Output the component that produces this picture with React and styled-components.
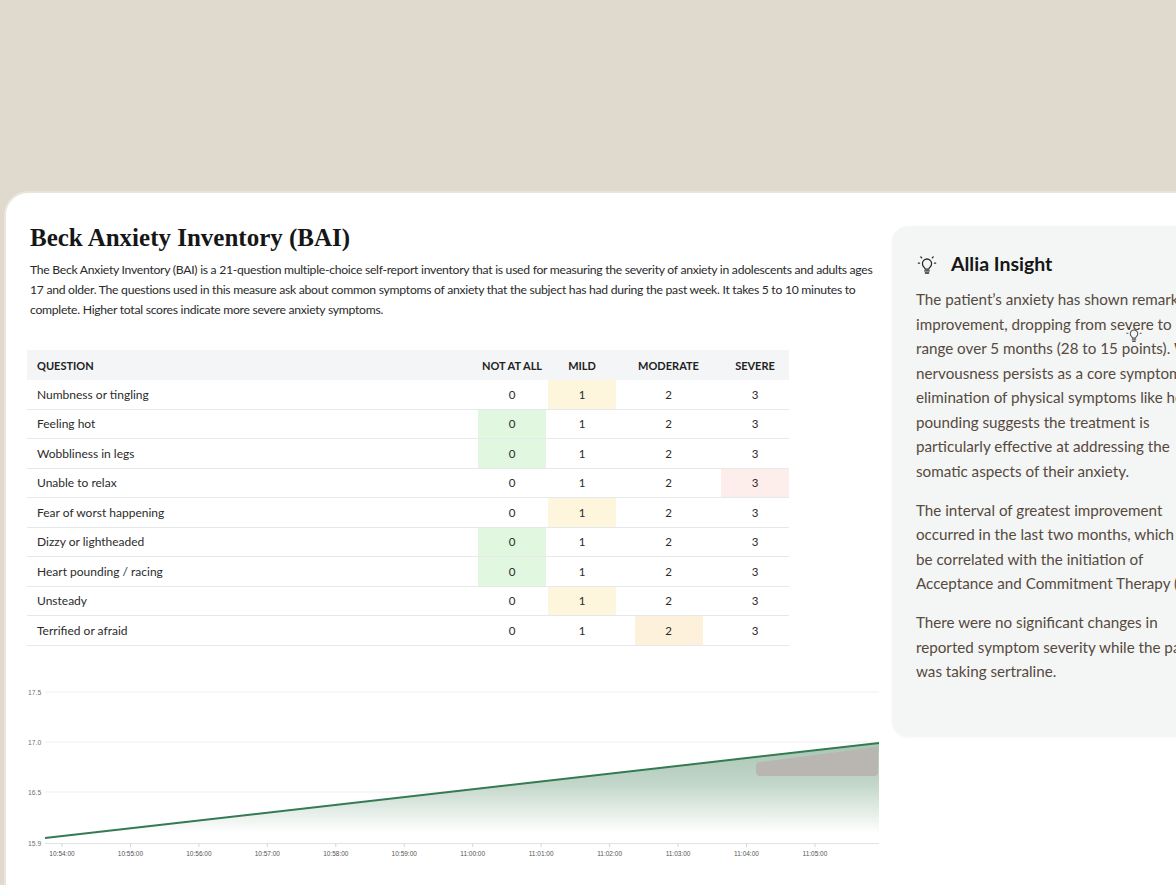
import React from "react";
import styled, { createGlobalStyle } from "styled-components";

const Global = createGlobalStyle`
  html, body { margin: 0; padding: 0; background: #e0d9ce; overflow: hidden; }
  body { font-family: Lato, "Noto Sans", sans-serif; }
  * { box-sizing: border-box; }
`;

const Page = styled.div`
  width: 1176px;
  height: 885px;
  overflow: hidden;
  padding: 193px 0 0 6px;
`;

const Card = styled.div`
  display: flex;
  gap: 12px;
  width: 1400px;
  min-height: 760px;
  padding: 33px 0 0 24px;
  background: #ffffff;
  border-top-left-radius: 22px;
  box-shadow: 0 0 0 2px rgba(255, 255, 255, 0.3);
`;

const LeftCol = styled.section`
  flex: none;
  width: 850px;
`;

const Title = styled.h1`
  margin: 0;
  font-family: "Liberation Serif", "DejaVu Serif", serif;
  font-size: 25px;
  line-height: 24px;
  font-weight: 700;
  color: #161616;
`;

const Desc = styled.p`
  margin: 10px 0 0;
  width: 848px;
  font-size: 12.2px;
  letter-spacing: -0.28px;
  line-height: 20px;
  color: #2a2a2a;
`;

const Table = styled.div`
  margin: 30px 0 0 -3px;
  width: 762px;
`;

const Row = styled.div`
  display: grid;
  grid-template-columns: 1fr 72px 68px 105px 68px;
  align-items: stretch;
  height: ${(p) => (p.$head ? "30px" : "29.5px")};
  background: ${(p) => (p.$head ? "#f4f5f6" : "transparent")};
  border-bottom: ${(p) => (p.$head ? "none" : "1px solid #e5e9e9")};
`;

const HeadCell = styled.div`
  display: flex;
  align-items: center;
  justify-content: ${(p) => (p.$left ? "flex-start" : "center")};
  padding-left: ${(p) => (p.$left ? "10px" : "0")};
  font-size: 11px;
  font-weight: 700;
  color: #222;
  white-space: nowrap;
`;

const QCell = styled.div`
  display: flex;
  align-items: center;
  padding-left: 10px;
  font-size: 12px;
  color: #2b2b2b;
`;

const toneColors = {
  green: "#e2f7df",
  yellow: "#fdf6dc",
  red: "#fdeeec",
  orange: "#fdf1dc",
};

const ScoreCell = styled.div`
  justify-self: center;
  width: 68px;
  display: flex;
  align-items: center;
  justify-content: center;
  font-size: 11.5px;
  color: #2b2b2b;
  background: ${(p) => (p.$tone ? toneColors[p.$tone] : "transparent")};
`;

const Chart = styled.svg`
  display: block;
  margin: 37px 0 0 -3px;
  overflow: visible;
`;

const Insight = styled.aside`
  position: relative;
  flex: none;
  width: 352px;
  height: 511px;
  padding: 26px 24px 24px 24px;
  background: #f3f6f5;
  border-radius: 16px;
  box-shadow: 0 1px 3px rgba(0, 0, 0, 0.03);
`;

const InsightHead = styled.div`
  display: flex;
  align-items: center;
  gap: 13px;
  height: 24px;
`;

const InsightTitle = styled.h2`
  margin: 0;
  font-size: 19.5px;
  line-height: 24px;
  font-weight: 700;
  color: #161616;
`;

const InsightBody = styled.div`
  margin-top: 11px;
  width: 304px;
`;

const Para = styled.p`
  margin: 0 0 14.5px;
  font-size: 15.2px;
  line-height: 24.5px;
  color: #574940;
`;

const Ghost = styled.div`
  position: absolute;
  left: 233px;
  top: 99px;
  opacity: 0.8;
`;

const Bulb = ({ size = 20 }) => (
  <svg width={size} height={size} viewBox="0 0 24 24" fill="none" stroke="#2a2a2a" strokeWidth="1.4" strokeLinecap="round" strokeLinejoin="round">
    <path d="M2.5 11h1.4M20.1 11h1.4M5.2 4.2l1 1M18.8 4.2l-1 1" />
    <path d="M8.6 15.2a5 5 0 1 1 6.8 0c-.8.7-1.2 1.5-1.3 2.3h-4.2c-.1-.8-.5-1.6-1.3-2.3z" />
    <path d="M9.6 19.6h4.8M10.2 21.8h3.6" />
  </svg>
);

const rows = [
  ["Numbness or tingling", 1, "yellow"],
  ["Feeling hot", 0, "green"],
  ["Wobbliness in legs", 0, "green"],
  ["Unable to relax", 3, "red"],
  ["Fear of worst happening", 1, "yellow"],
  ["Dizzy or lightheaded", 0, "green"],
  ["Heart pounding / racing", 0, "green"],
  ["Unsteady", 1, "yellow"],
  ["Terrified or afraid", 2, "orange"],
];

const yTicks = [
  ["17.5", 9],
  ["17.0", 59],
  ["16.5", 109],
];
const xLabels = ["10:54:00", "10:55:00", "10:56:00", "10:57:00", "10:58:00", "10:59:00", "11:00:00", "11:01:00", "11:02:00", "11:03:00", "11:04:00", "11:05:00"];

const ChartSvg = () => (
  <Chart width="853" height="185" viewBox="0 0 853 185">
    <defs>
      <linearGradient id="areaFill" x1="0" y1="60" x2="0" y2="150" gradientUnits="userSpaceOnUse">
        <stop offset="0" stopColor="#a9c5b3" />
        <stop offset="0.45" stopColor="#c2d6c9" />
        <stop offset="1" stopColor="#ffffff" />
      </linearGradient>
    </defs>
    {yTicks.map(([t, y]) => (
      <g key={t}>
        <line x1="18" x2="852" y1={y} y2={y} stroke="#efefef" strokeWidth="1" />
        <text x="1" y={y + 2.5} fontSize="6.8" fill="#6f6f6f" fontFamily="Liberation Sans, sans-serif">{t}</text>
      </g>
    ))}
    <text x="1" y="162.5" fontSize="6.8" fill="#6f6f6f" fontFamily="Liberation Sans, sans-serif">15.9</text>
    <path d="M18 155 L852 60 L852 160 L18 160 Z" fill="url(#areaFill)" />
    <path d="M733 79 L851 64 L851 89 Q851 93 847 93 L733 93 Q729 93 729 89 L729 83 Q729 79 733 79 Z" fill="#b9b5b1" />
    <line x1="18" x2="852" y1="160.5" y2="160.5" stroke="#e2e2e2" strokeWidth="1" />
    <path d="M18 155 L852 60" stroke="#347a52" strokeWidth="2" fill="none" />
    {xLabels.map((l, i) => {
      const x = 35 + i * 68.45;
      return (
        <g key={l}>
          <line x1={x} x2={x} y1="160.5" y2="164" stroke="#d6d6d6" strokeWidth="1" />
          <text x={x} y="173" fontSize="6.5" fill="#555" textAnchor="middle" fontFamily="Liberation Sans, sans-serif">{l}</text>
        </g>
      );
    })}
  </Chart>
);

export default function App() {
  return (
    <Page>
      <Global />
      <Card>
        <LeftCol>
          <Title>Beck Anxiety Inventory (BAI)</Title>
          <Desc>
            The Beck Anxiety Inventory (BAI) is a 21-question multiple-choice self-report inventory that is used for measuring the severity of anxiety in adolescents and adults ages 17 and older. The questions used in this measure ask about common symptoms of anxiety that the subject has had during the past week. It takes 5 to 10 minutes to complete. Higher total scores indicate more severe anxiety symptoms.
          </Desc>
          <Table>
            <Row $head>
              <HeadCell $left>QUESTION</HeadCell>
              <HeadCell>NOT AT ALL</HeadCell>
              <HeadCell>MILD</HeadCell>
              <HeadCell>MODERATE</HeadCell>
              <HeadCell>SEVERE</HeadCell>
            </Row>
            {rows.map(([q, sel, tone]) => (
              <Row key={q}>
                <QCell>{q}</QCell>
                {[0, 1, 2, 3].map((v) => (
                  <ScoreCell key={v} $tone={v === sel ? tone : null}>{v}</ScoreCell>
                ))}
              </Row>
            ))}
          </Table>
          <ChartSvg />
        </LeftCol>
        <Insight>
          <InsightHead>
            <Bulb size={22} />
            <InsightTitle>Allia Insight</InsightTitle>
          </InsightHead>
          <InsightBody>
            <Para>
              The patient’s anxiety has shown remarkable improvement, dropping from severe to mild range over 5 months (28 to 15 points). While nervousness persists as a core symptom, the elimination of physical symptoms like heart pounding suggests the treatment is particularly effective at addressing the somatic aspects of their anxiety.
            </Para>
            <Para>
              The interval of greatest improvement occurred in the last two months, which may be correlated with the initiation of Acceptance and Commitment Therapy (ACT).
            </Para>
            <Para>
              There were no significant changes in
              <br />
              reported symptom severity while the patient was taking sertraline.
            </Para>
          </InsightBody>
          <Ghost>
            <Bulb size={18} />
          </Ghost>
        </Insight>
      </Card>
    </Page>
  );
}
